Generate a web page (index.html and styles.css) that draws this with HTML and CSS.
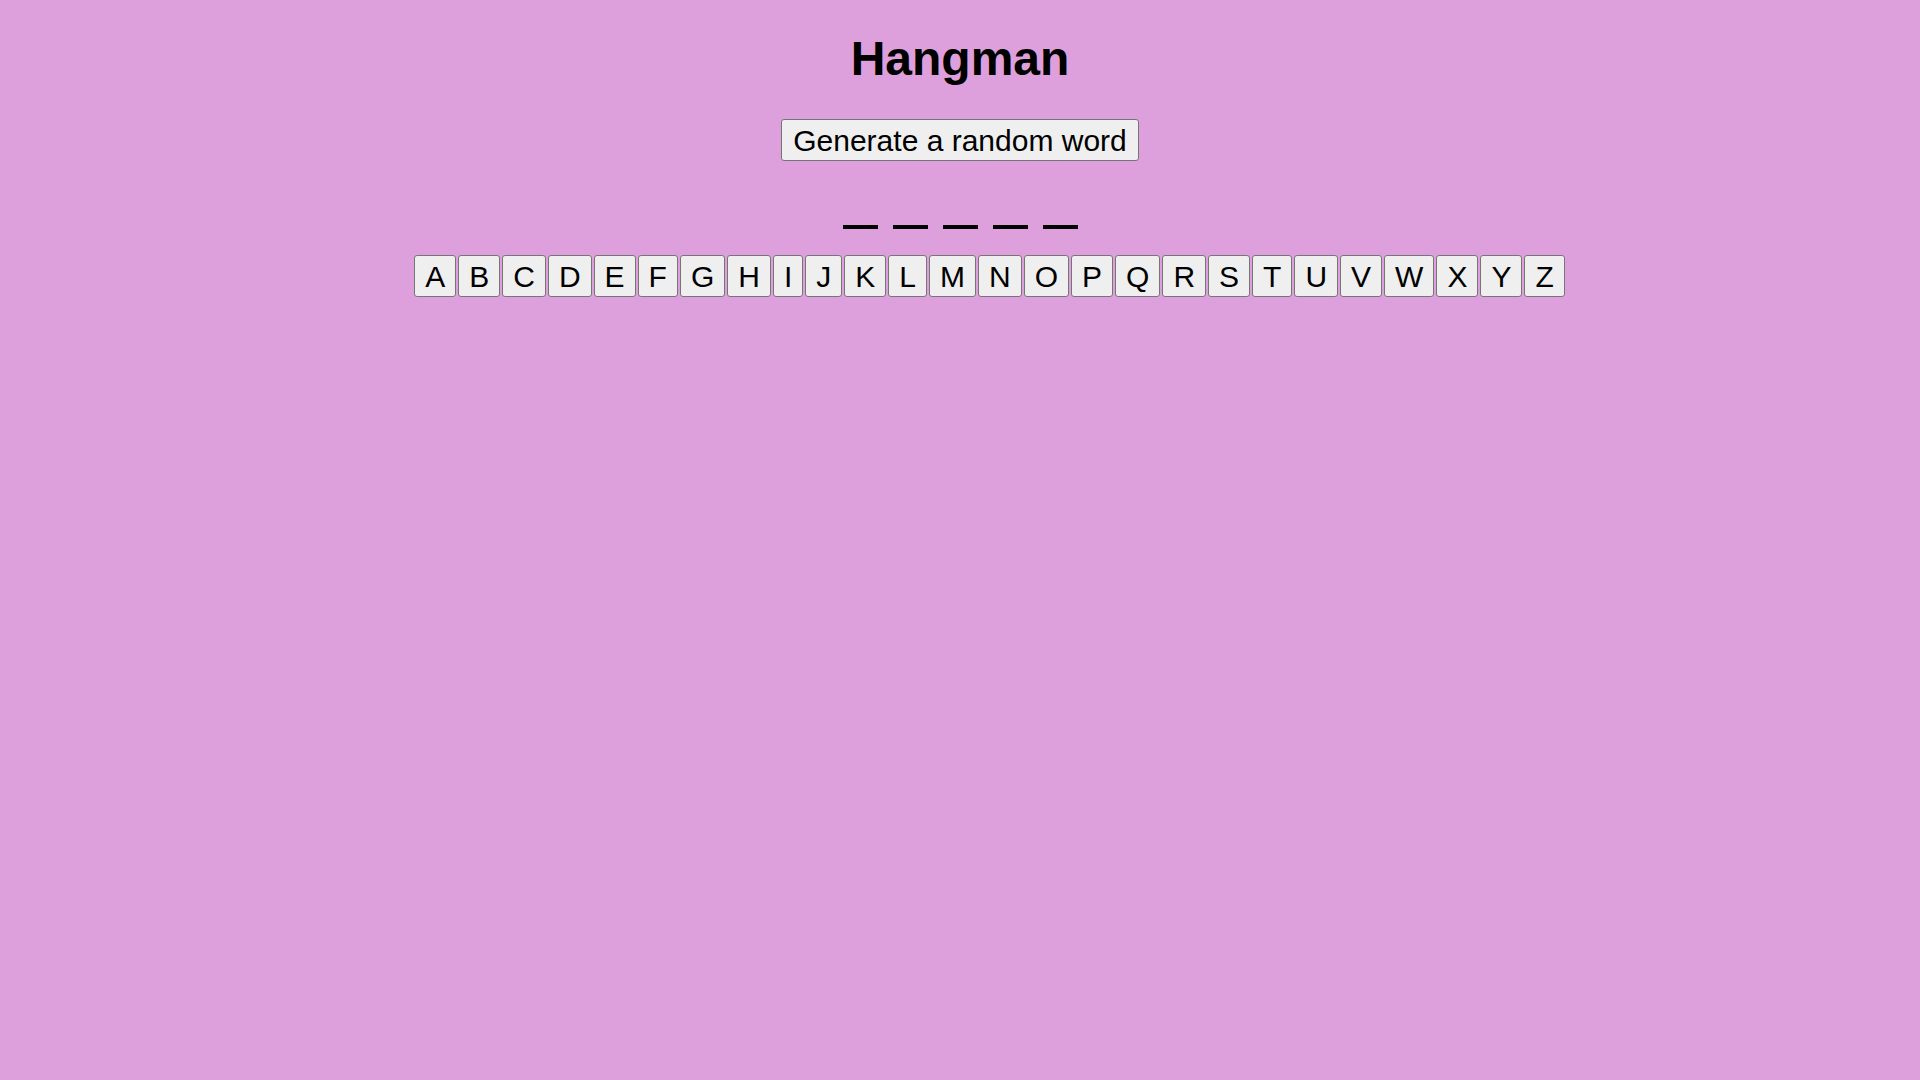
FILE: index.html
```html
<!DOCTYPE html>
<html lang="en">
<head>
<meta charset="utf-8">
<title>Hangman</title>
<link rel="stylesheet" href="styles.css">
</head>
<body>
<main class="game">
  <h1 class="title">Hangman</h1>
  <button class="btn generate">Generate a random word</button>
  <div class="word">
    <span class="dash"></span><span class="dash"></span><span class="dash"></span><span class="dash"></span><span class="dash"></span>
  </div>
  <div class="letters">
    <button class="btn letter">A</button><button class="btn letter">B</button><button class="btn letter">C</button><button class="btn letter">D</button><button class="btn letter">E</button><button class="btn letter">F</button><button class="btn letter">G</button><button class="btn letter">H</button><button class="btn letter">I</button><button class="btn letter">J</button><button class="btn letter">K</button><button class="btn letter">L</button><button class="btn letter">M</button><button class="btn letter">N</button><button class="btn letter">O</button><button class="btn letter">P</button><button class="btn letter">Q</button><button class="btn letter">R</button><button class="btn letter">S</button><button class="btn letter">T</button><button class="btn letter">U</button><button class="btn letter">V</button><button class="btn letter">W</button><button class="btn letter">X</button><button class="btn letter">Y</button><button class="btn letter">Z</button>
  </div>
</main>
</body>
</html>
```
FILE: styles.css
```css
html, body {
  margin: 0;
  padding: 0;
  background: #dda0dd;
  min-height: 100%;
}
body {
  font-family: "Liberation Sans", Arial, sans-serif;
  color: #000;
  height: 1080px;
}
.game {
  display: flex;
  flex-direction: column;
  align-items: center;
  padding-top: 31px;
}
.title {
  margin: 0 0 33px;
  font-size: 48px;
  font-weight: bold;
  line-height: 55px;
  text-align: center;
}
.btn {
  font-family: "Liberation Sans", Arial, sans-serif;
  font-size: 30px;
  color: #000;
  background: #efefef;
  border: 1px solid #767676;
  border-radius: 3px;
  height: 42px;
  line-height: 39px;
  padding: 1px 10px 0;
  margin: 0;
  box-sizing: border-box;
}
.generate {
  padding: 1px 11px 0;
}
.word {
  display: flex;
  justify-content: center;
  gap: 15px;
  padding: 64px 0 26px;
}
.dash {
  display: block;
  width: 35px;
  height: 4px;
  background: #000;
}
.letters {
  display: flex;
  justify-content: center;
  gap: 2px;
  padding-left: 59px;
  align-self: stretch;
}
```
